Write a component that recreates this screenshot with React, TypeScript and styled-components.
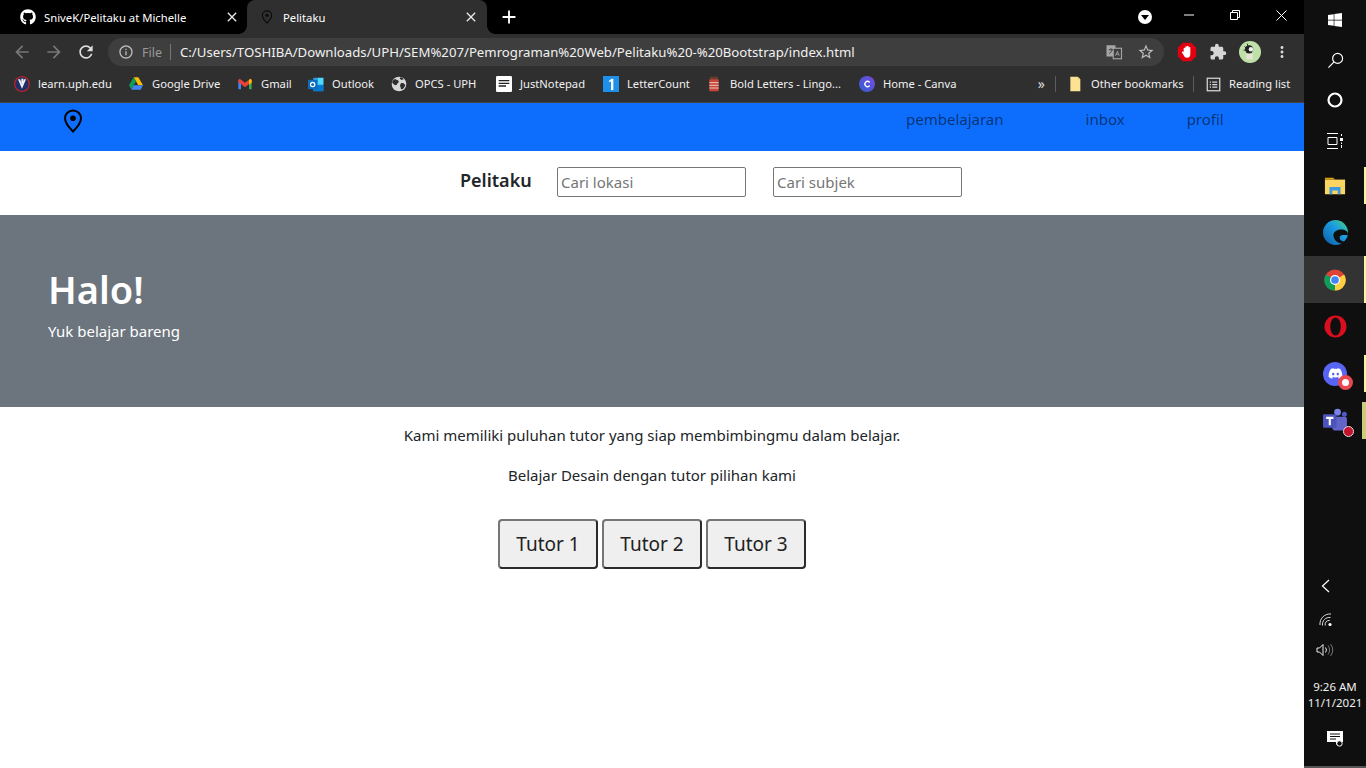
import React from 'react';
import styled, { createGlobalStyle } from 'styled-components';
import { FaGithub, FaWindows, FaDiscord } from 'react-icons/fa';
import { MdArrowBack, MdArrowForward, MdRefresh, MdInfoOutline, MdStarBorder, MdExtension, MdMoreVert, MdClose, MdAdd } from 'react-icons/md';

const Global = createGlobalStyle`
  html, body { margin: 0; padding: 0; background: #fff; }
  * { box-sizing: border-box; }
  body { font-family: "Noto Sans", "Open Sans", Arial, sans-serif; overflow: hidden; }
`;

const Screen = styled.div`display: flex; width: 1366px; height: 768px; overflow: hidden;`;
const Main = styled.div`display: flex; flex-direction: column; width: 1304px; height: 768px; background: #fff;`;

const TabStrip = styled.div`display: flex; align-items: stretch; height: 34px; background: #000; color: #fff; padding-left: 8px; position: relative;`;
const Tab = styled.div<{ $active?: boolean }>`
  position: relative; display: flex; align-items: center; width: 240px; height: 34px; padding: 0 8px 0 12px;
  font-size: 11.3px; border-radius: 8px 8px 0 0; margin-left: ${p => (p.$active ? '-1px' : '0')};
  background: ${p => (p.$active ? '#2f2f2f' : 'transparent')};
  ${p => p.$active ? `
    &::before, &::after { content: ''; position: absolute; bottom: 0; width: 8px; height: 8px; }
    &::before { left: -8px; background: radial-gradient(circle at 0 0, #000 7.5px, #2f2f2f 8px); }
    &::after { right: -8px; background: radial-gradient(circle at 100% 0, #000 7.5px, #2f2f2f 8px); }
  ` : ''}
`;
const TabPin = styled.div`display: flex; margin-left: 1px; color: #0c0c0c;`;
const TabTitle = styled.span<{ $indent: number }>`flex: 1; margin-left: ${p => p.$indent}px; white-space: nowrap; overflow: hidden;`;
const TabClose = styled(MdClose)`font-size: 16px; color: #e8e8e8; flex: none;`;
const NewTab = styled(MdAdd)`font-size: 22px; color: #fff; align-self: center; margin-left: 11px;`;
const Spring = styled.div`flex: 1;`;
const ProfileDot = styled.div`width: 14px; height: 14px; border-radius: 50%; background: #fff; align-self: center; display: flex; align-items: center; justify-content: center; margin-right: 14px;`;
const DotArrow = styled.div`width: 0; height: 0; border-left: 4px solid transparent; border-right: 4px solid transparent; border-top: 5px solid #000; margin-top: 1px;`;
const WinButton = styled.div`width: 46px; height: 30px; display: flex; align-items: center; justify-content: center;`;

const Toolbar = styled.div`display: flex; align-items: center; height: 34px; padding: 4px 0 2px 12px; background: #2f2f2f; color: #fff;`;
const NavIcon = styled.div<{ $dim?: boolean }>`width: 20px; height: 20px; margin-right: 12px; display: flex; align-items: center; justify-content: center; font-size: 20px; color: ${p => (p.$dim ? '#777' : '#dcdcdc')};`;
const Omnibox = styled.div`display: flex; align-items: center; width: 1056px; height: 28px; padding: 0 9px 0 10px; border-radius: 14px; background: #3e3e3e;`;
const Scheme = styled.span`margin-left: 8px; width: 21px; font-size: 12.5px; color: #9a9a9a;`;
const OmniSep = styled.div`width: 1px; height: 16px; margin: 0 9px 0 7px; background: #777;`;
const Url = styled.span`flex: 1; color: #f1f1f1; white-space: nowrap; font-size: 13.2px;`;
const OmniAction = styled.div`width: 18px; height: 18px; margin-left: 14px; display: flex; align-items: center; justify-content: center; color: #bdbdbd; font-size: 18px;`;
const ExtIcon = styled.div<{ $w: number; $ml: number }>`width: ${p => p.$w}px; height: ${p => p.$w}px; margin-left: ${p => p.$ml}px; display: flex; align-items: center; justify-content: center; font-size: ${p => p.$w}px; color: #d6d6d6;`;

const BookmarkBar = styled.div`display: flex; align-items: center; height: 35px; padding: 0 0 2px 14px; background: #2f2f2f; border-bottom: 1px solid #454545; color: #f1f1f1; font-size: 11.2px;`;
const Bookmark = styled.div<{ $w: number }>`display: flex; align-items: center; flex: none; width: ${p => p.$w}px; height: 16px;`;
const BookmarkIcon = styled.div`width: 16px; height: 16px; margin-right: 8px; flex: none; display: flex; align-items: center; justify-content: center;`;
const BookmarkLabel = styled.span`white-space: nowrap; margin-top: -2px;`;
const BarSep = styled.div<{ $ml: number; $mr: number }>`width: 1px; height: 16px; background: #5c5c5c; margin: 0 ${p => p.$mr}px 0 ${p => p.$ml}px;`;
const More = styled.span`margin-left: auto; font-size: 14px; line-height: 14px; color: #ddd;`;

const NavBar = styled.nav`display: flex; align-items: center; height: 48px; background: #0d6efd; padding-bottom: 12px;`;
const PinSlot = styled.div`display: flex; margin-left: 61px; color: #000;`;
const NavLinks = styled.div`display: flex; margin-left: auto; margin-bottom: 4px; width: 398px;`;
const NavLink = styled.a<{ $ml: number }>`font-size: 15px; margin-left: ${p => p.$ml}px; color: rgba(0, 0, 0, 0.55); text-decoration: none; white-space: nowrap;`;

const SearchRow = styled.div`display: flex; align-items: center; height: 64px; padding: 0 0 2px 460px;`;
const Brand = styled.span`width: 97px; font-size: 18px; font-weight: 600; color: #212529; margin-top: -5px;`;
const SearchInput = styled.input`width: 189px; height: 30px; margin-right: 27px; padding: 1px 3px; border: 1px solid #767676; border-radius: 2px; font-family: inherit; font-size: 15px; color: #212529; background: #fff;
  &::placeholder { color: #757575; opacity: 1; }`;

const Hero = styled.section`height: 192px; background: #6c757d; color: #fff; padding: 46px 48px 0;`;
const HeroTitle = styled.h1`margin: 0; font-size: 38px; line-height: 56px; font-weight: 600;`;
const HeroText = styled.p`margin: 2px 0 0; font-size: 15px; line-height: 24px;`;

const Content = styled.main`display: flex; flex-direction: column; align-items: center; padding-top: 16px; color: #212529; font-size: 15px;`;
const Line = styled.p`margin: 0 0 16px; line-height: 24px; white-space: nowrap;`;
const Buttons = styled.div`display: flex; gap: 4px; margin-top: 16px;`;
const TutorButton = styled.button`width: 100px; height: 50px; padding: 0; font-family: inherit; font-size: 19px; color: #222; background: #efefef; border: 2px solid; border-color: #767676 #2b2b2b #2b2b2b #767676; border-radius: 4px;`;

const Taskbar = styled.aside`display: flex; flex-direction: column; width: 62px; height: 768px; background: #0f0f0f; color: #fff; position: relative;`;
const TaskSlot = styled.div<{ $h: number; $bar?: string; $active?: boolean; $barW?: number; $shift?: number }>`
  height: ${p => p.$h}px; display: flex; align-items: center; justify-content: center; position: relative; flex: none;
  padding-right: ${p => p.$shift || 0}px;
  background: ${p => (p.$active ? '#333' : 'transparent')};
  ${p => p.$bar ? `&::after { content: ''; position: absolute; right: 0; top: ${p.$active ? 0 : 5}px; bottom: ${p.$active ? 0 : 5}px; width: ${p.$barW || 2}px; background: ${p.$bar}; }` : ''}
`;
const Clock = styled.div`display: flex; flex-direction: column; align-items: center; font-size: 11.5px; line-height: 16px; color: #f0f0f0; white-space: nowrap;`;
const TaskEdge = styled.div`position: absolute; left: 0; right: 0; bottom: 0; height: 2px; background: #555;`;

const S = ({ size, children, vb = '0 0 24 24' }: { size: number; children: React.ReactNode; vb?: string }) => (
  <svg width={size} height={size} viewBox={vb} fill="none">{children}</svg>
);

const PinIcon = ({ size, stroke = 2 }: { size: number; stroke?: number }) => (
  <svg width={size} height={size} viewBox="0 0 24 24" fill="none">
    <path d="M12 1.5c-4.4 0-8 3.4-8 7.7 0 5.3 8 13.3 8 13.3s8-8 8-13.3c0-4.3-3.6-7.7-8-7.7z" stroke="currentColor" strokeWidth={stroke} />
    <circle cx="12" cy="9.2" r="2.8" fill="currentColor" />
  </svg>
);

const Drive = () => <S size={16}><path d="M8.5 2h7l7 12h-7z" fill="#fbbc04" /><path d="M8.5 2L1.5 14l3.5 6 7-12z" fill="#0f9d58" /><path d="M5 20.5l3.5-6.5h14L19 20.5z" fill="#4285f4" /></S>;
const Gmail = () => <S size={16}><path d="M2 6v14h4V10z" fill="#4285f4" /><path d="M22 6v14h-4V10z" fill="#34a853" /><path d="M2 6l2-2 8 6 8-6 2 2v3l-10 8L2 9z" fill="#ea4335" /><path d="M18 6l2-2 2 2v4l-4 3z" fill="#fbbc04" /></S>;
const Outlook = () => <S size={17}><rect x="8" y="2" width="15" height="20" fill="#28a8ea" /><rect x="15" y="2" width="8" height="10" fill="#50d9ff" /><path d="M8 13h15v9H8z" fill="#0078d4" /><rect x="0" y="5" width="14" height="14" fill="#0f6cbd" /><circle cx="7" cy="12" r="3.2" stroke="#fff" strokeWidth="1.8" /></S>;
const Globe = () => <S size={16}><circle cx="12" cy="12" r="11" fill="#d8d8d8" /><path d="M5 5c3 0 4 1 6 2s0 3-1 4-1 3-3 3-4-3-5-4 1-4 3-5zM15 11c2-1 5 0 6 2s-3 7-5 7-1-3-2-4 0-4 1-5zM14 2c2 0 4 1 5 3l-3 1-3-2z" fill="#2f2f2f" /></S>;
const Notepad = () => <S size={16}><rect x="0" y="0" width="24" height="24" rx="2" fill="#fff" /><path d="M4 7h16M4 11h16M4 15h11" stroke="#222" strokeWidth="2" /></S>;
const LetterOne = () => <S size={16}><rect x="0" y="0" width="24" height="24" fill="#1e90ea" /><path d="M9 7l4-3h2.5v17h-3.5V8l-3 1.5z" fill="#fff" /></S>;
const Jar = () => <S size={16}><rect x="6" y="1" width="12" height="4" fill="#6a3b30" /><rect x="5" y="5" width="14" height="18" rx="1" fill="#c9453a" /><path d="M5 10h14M5 14h14M5 18h14" stroke="#e8c9b8" strokeWidth="1.5" /></S>;
const Canva = () => <S size={16}><defs><linearGradient id="cv" x1="0" y1="1" x2="1" y2="0"><stop offset="0" stopColor="#2f5fd0" /><stop offset="1" stopColor="#7b4ae2" /></linearGradient></defs><circle cx="12" cy="12" r="12" fill="url(#cv)" /><path d="M15.5 9a4 4 0 1 0 0 6" stroke="#fff" strokeWidth="2" strokeLinecap="round" /></S>;
const UphLogo = () => <S size={16}><circle cx="12" cy="12" r="11" fill="#1f2f6a" stroke="#b5242a" strokeWidth="2" /><path d="M6 5l6 14 6-14-3 0-3 7-3-7z" fill="#f4f4f4" /><path d="M11 4h3v7h-3z" fill="#f4f4f4" /></S>;
const Folder = () => <S size={16}><path d="M5 1h11l4 4v18H5z" fill="#fde293" /><path d="M16 1v4h4z" fill="#e8c56b" /></S>;
const ReadingList = () => <S size={15}><rect x="2" y="2" width="20" height="20" stroke="#d8d8d8" strokeWidth="2" /><path d="M6 8h2M10 8h8M6 12h2M10 12h8M6 16h2M10 16h8" stroke="#d8d8d8" strokeWidth="2" /></S>;
const Translate = () => <S size={18}><rect x="2" y="3" width="12" height="15" fill="#a5a5a5" /><rect x="11" y="7" width="11" height="14" stroke="#a5a5a5" strokeWidth="1.5" fill="#3e3e3e" /><path d="M5 9h6M8 7v2M9.5 9c-.5 2-2 4-4 5" stroke="#3e3e3e" strokeWidth="1.3" /><path d="M14 17l2.5-6 2.5 6M15 15h3" stroke="#a5a5a5" strokeWidth="1.2" /></S>;
const StopHand = () => <S size={20}><path d="M7 1h10l6 6v10l-6 6H7l-6-6V7z" fill="#e3000f" /><path d="M8 13V8a1 1 0 0 1 2 0V6a1 1 0 0 1 2 0v-.5a1 1 0 0 1 2 0V7a1 1 0 0 1 2 0v7c0 3-1 5-4 5-2 0-3-1-4-3l-2-3a1 1 0 0 1 2-1z" fill="#fff" /></S>;
const Avatar = () => <S size={22}><circle cx="12" cy="12" r="12" fill="#bfe0a8" /><circle cx="11" cy="9" r="4.5" fill="#222" /><circle cx="13" cy="9" r="2.4" fill="#f2f2f2" /><path d="M8 14h7v6H8z" fill="#e8e4d5" /><path d="M6 6l2 2M5 10l2 0M9 3l1 3" stroke="#222" /></S>;
const Minimize = () => <svg width="10" height="10" viewBox="0 0 10 10"><path d="M0 5h10" stroke="#fff" /></svg>;
const Restore = () => <svg width="10" height="10" viewBox="0 0 10 10" fill="none"><path d="M.5 2.5h7v7h-7zM2.5 2.5v-2h7v7h-2" stroke="#fff" /></svg>;
const CloseWin = () => <svg width="11" height="11" viewBox="0 0 11 11"><path d="M.5.5l10 10M10.5.5l-10 10" stroke="#fff" /></svg>;

const SearchGlass = () => <S size={17}><circle cx="15" cy="9" r="7" stroke="#fff" strokeWidth="1.7" /><path d="M10 14l-8 8" stroke="#fff" strokeWidth="1.7" /></S>;
const Cortana = () => <svg width="16" height="16" viewBox="0 0 16 16"><circle cx="8" cy="8" r="6.5" stroke="#fff" strokeWidth="2.2" fill="none" /></svg>;
const TaskView = () => <svg width="16" height="16" viewBox="0 0 16 16" fill="none"><path d="M0 .5h11M0 15.5h11M1 4.5h9v7H1zM14.5 1v2M14.5 12v3" stroke="#fff" /><rect x="13" y="5" width="3" height="3" fill="#fff" /><path d="M14.5 9.5v1.5" stroke="#fff" /></svg>;
const Explorer = () => <S size={22}><path d="M1 3h9l2 2H1z" fill="#e3a008" /><path d="M1 5h22v16H1z" fill="#fcd462" /><path d="M6 21v-8h12v8h-3v-4H9v4z" fill="#3d9ae0" /></S>;
const Edge = () => <S size={25}><defs><linearGradient id="ed" x1="0" y1="1" x2="1" y2="0"><stop offset="0" stopColor="#0c59a4" /><stop offset="0.6" stopColor="#1b9de2" /><stop offset="1" stopColor="#4fd66e" /></linearGradient></defs><circle cx="12" cy="12" r="12" fill="url(#ed)" /><path d="M24 13.5c0-3-3-4.5-6.5-4.5-4.5 0-7.5 2.5-7.5 5.5 0 5 4.5 8.500 9 8 2-.2 3-1 4-2-2 .5-7 0-7-3.500 0-2 2-2.500 4-2.500 2 0 4 .5 4-1z" fill="#0f0f0f" /></S>;
const Chrome = () => <S size={22}><circle cx="12" cy="12" r="11.5" fill="#db4437" /><path d="M12 12L2 6a11.500 11.500 0 0 0 10 17.500z" fill="#0f9d58" /><path d="M12 12l10-6a11.500 11.500 0 0 1-10 17.500z" fill="#ffcd40" /><circle cx="12" cy="12" r="5.5" fill="#fff" /><circle cx="12" cy="12" r="4.2" fill="#4285f4" /></S>;
const Opera = () => <S size={23}><ellipse cx="12" cy="12" rx="11.5" ry="11.5" fill="#d80f1e" /><ellipse cx="12" cy="12" rx="5.5" ry="9.5" fill="#0f0f0f" /></S>;
const Discord = () => <TaskIconWrap><DiscordCircle><FaDiscord /></DiscordCircle><RedBadge $s={15} /></TaskIconWrap>;
const Teams = () => <TaskIconWrap><S size={25}><circle cx="14" cy="4" r="3.2" fill="#7b83eb" /><circle cx="20.5" cy="6" r="2.4" fill="#5059c9" /><rect x="9" y="8.5" width="14" height="13" rx="2" fill="#6264c7" /><rect x="0" y="6" width="13" height="13" rx="1" fill="#4b53bc" /><path d="M3 9.500h7M6.500 9.500v7" stroke="#fff" strokeWidth="2" /></S><RedBadge $s={11} $dark /></TaskIconWrap>;
const TaskIconWrap = styled.div`position: relative; display: flex;`;
const DiscordCircle = styled.div`width: 24px; height: 24px; border-radius: 50%; background: #5865f2; color: #fff; font-size: 15px; display: flex; align-items: center; justify-content: center;`;
const RedBadge = styled.div<{ $s: number; $dark?: boolean }>`position: absolute; right: -6px; bottom: -4px; width: ${p => p.$s}px; height: ${p => p.$s}px; border-radius: 50%; background: ${p => (p.$dark ? '#c4122f' : '#fff')}; border: ${p => (p.$dark ? '1.5px solid #ddd' : '4px solid #e8484f')};`;

const Chevron = () => <svg width="9" height="14" viewBox="0 0 9 14" fill="none"><path d="M8 1L1.500 7 8 13" stroke="#fff" strokeWidth="1.2" /></svg>;
const Wifi = () => <svg width="14" height="14" viewBox="0 0 14 14" fill="none"><path d="M1 12a10 10 0 0 1 11-11M3.500 12.500a7 7 0 0 1 8-8M6.200 12.500a4 4 0 0 1 4.500-5" stroke="#ddd" strokeWidth="1" /><circle cx="11" cy="11.500" r="1.600" fill="#fff" /></svg>;
const Speaker = () => <svg width="18" height="14" viewBox="0 0 18 14" fill="none"><path d="M1 5h2.500L7 1.500v11L3.500 9H1z" stroke="#eee" /><path d="M9.500 4.500a4 4 0 0 1 0 5" stroke="#eee" /><path d="M12 2.500a7 7 0 0 1 0 9M14.500 1a10 10 0 0 1 0 12" stroke="#777" /></svg>;
const Notice = () => <svg width="16" height="16" viewBox="0 0 16 16" fill="none"><path d="M0 0h16v11h-4l-3 3v-3H0z" fill="#fff" /><path d="M3 3h10M3 5.500h10M3 8h6" stroke="#0f0f0f" /><circle cx="12.500" cy="12.500" r="2.700" fill="#0f0f0f" stroke="#fff" /></svg>;

const bookmarks: [number, React.ReactNode, string][] = [
  [114, <UphLogo />, 'learn.uph.edu'],
  [109, <Drive />, 'Google Drive'],
  [71, <Gmail />, 'Gmail'],
  [83, <Outlook />, 'Outlook'],
  [105, <Globe />, 'OPCS - UPH'],
  [107, <Notepad />, 'JustNotepad'],
  [103, <LetterOne />, 'LetterCount'],
  [153, <Jar />, 'Bold Letters - Lingo...'],
  [130, <Canva />, 'Home - Canva'],
];

export default function App() {
  return (
    <Screen>
      <Global />
      <Main>
        <TabStrip>
          <Tab>
            <FaGithub size={16} />
            <TabTitle $indent={8}>SniveK/Pelitaku at Michelle</TabTitle>
            <TabClose />
          </Tab>
          <Tab $active>
            <TabPin><PinIcon size={14} /></TabPin>
            <TabTitle $indent={9}>Pelitaku</TabTitle>
            <TabClose />
          </Tab>
          <NewTab />
          <Spring />
          <ProfileDot><DotArrow /></ProfileDot>
          <WinButton><Minimize /></WinButton>
          <WinButton><Restore /></WinButton>
          <WinButton><CloseWin /></WinButton>
        </TabStrip>
        <Toolbar>
          <NavIcon $dim><MdArrowBack /></NavIcon>
          <NavIcon $dim><MdArrowForward /></NavIcon>
          <NavIcon><MdRefresh /></NavIcon>
          <Omnibox>
            <MdInfoOutline size={16} color="#bbb" />
            <Scheme>File</Scheme>
            <OmniSep />
            <Url>C:/Users/TOSHIBA/Downloads/UPH/SEM%207/Pemrograman%20Web/Pelitaku%20-%20Bootstrap/index.html</Url>
            <OmniAction><Translate /></OmniAction>
            <OmniAction><MdStarBorder /></OmniAction>
          </Omnibox>
          <ExtIcon $w={20} $ml={13}><StopHand /></ExtIcon>
          <ExtIcon $w={18} $ml={12}><MdExtension /></ExtIcon>
          <ExtIcon $w={22} $ml={12}><Avatar /></ExtIcon>
          <ExtIcon $w={18} $ml={12}><MdMoreVert /></ExtIcon>
        </Toolbar>
        <BookmarkBar>
          {bookmarks.map(([w, icon, label]) => (
            <Bookmark key={label} $w={w}>
              <BookmarkIcon>{icon}</BookmarkIcon>
              <BookmarkLabel>{label}</BookmarkLabel>
            </Bookmark>
          ))}
          <More>»</More>
          <BarSep $ml={10} $mr={11} />
          <Bookmark $w={126}>
            <BookmarkIcon><Folder /></BookmarkIcon>
            <BookmarkLabel>Other bookmarks</BookmarkLabel>
          </Bookmark>
          <BarSep $ml={0} $mr={11} />
          <Bookmark $w={99}>
            <BookmarkIcon><ReadingList /></BookmarkIcon>
            <BookmarkLabel>Reading list</BookmarkLabel>
          </Bookmark>
        </BookmarkBar>
        <NavBar>
          <PinSlot><PinIcon size={24} /></PinSlot>
          <NavLinks>
            <NavLink $ml={0}>pembelajaran</NavLink>
            <NavLink $ml={82}>inbox</NavLink>
            <NavLink $ml={62}>profil</NavLink>
          </NavLinks>
        </NavBar>
        <SearchRow>
          <Brand>Pelitaku</Brand>
          <SearchInput placeholder="Cari lokasi" />
          <SearchInput placeholder="Cari subjek" />
        </SearchRow>
        <Hero>
          <HeroTitle>Halo!</HeroTitle>
          <HeroText>Yuk belajar bareng</HeroText>
        </Hero>
        <Content>
          <Line>Kami memiliki puluhan tutor yang siap membimbingmu dalam belajar.</Line>
          <Line>Belajar Desain dengan tutor pilihan kami</Line>
          <Buttons>
            <TutorButton>Tutor 1</TutorButton>
            <TutorButton>Tutor 2</TutorButton>
            <TutorButton>Tutor 3</TutorButton>
          </Buttons>
        </Content>
      </Main>
      <Taskbar>
        <TaskSlot $h={40}><FaWindows size={16} /></TaskSlot>
        <TaskSlot $h={40}><SearchGlass /></TaskSlot>
        <TaskSlot $h={40}><Cortana /></TaskSlot>
        <TaskSlot $h={42}><TaskView /></TaskSlot>
        <TaskSlot $h={47} $bar="#f6f6a0"><Explorer /></TaskSlot>
        <TaskSlot $h={47}><Edge /></TaskSlot>
        <TaskSlot $h={47} $active $bar="#f6f6a0"><Chrome /></TaskSlot>
        <TaskSlot $h={47}><Opera /></TaskSlot>
        <TaskSlot $h={47} $bar="#f6f6a0"><Discord /></TaskSlot>
        <TaskSlot $h={47} $bar="#c9cc78" $barW={4}><Teams /></TaskSlot>
        <TaskSlot $h={125} />
        <TaskSlot $h={34} $shift={20}><Chevron /></TaskSlot>
        <TaskSlot $h={34} $shift={18}><Wifi /></TaskSlot>
        <TaskSlot $h={26} $shift={20}><Speaker /></TaskSlot>
        <TaskSlot $h={64}>
          <Clock><span>9:26 AM</span><span>11/1/2021</span></Clock>
        </TaskSlot>
        <TaskSlot $h={24}><Notice /></TaskSlot>
        <TaskEdge />
      </Taskbar>
    </Screen>
  );
}
